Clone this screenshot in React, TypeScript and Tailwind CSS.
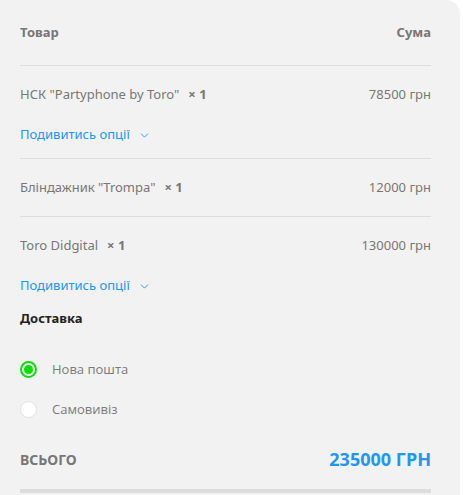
import { ChevronDown } from "lucide-react";

const items = [
  { name: 'НСК "Partyphone by Toro"', qty: 1, sum: "78500 грн", options: true },
  { name: 'Бліндажник "Trompa"', qty: 1, sum: "12000 грн", options: false },
  { name: "Toro Didgital", qty: 1, sum: "130000 грн", options: true },
];

function Radio({ checked, label }: { checked: boolean; label: string }) {
  return (
    <label className="flex items-center h-10">
      <span
        className={
          checked
            ? "w-[17px] h-[17px] rounded-full border-2 border-[#00e000] bg-white flex items-center justify-center"
            : "w-[17px] h-[17px] rounded-full border border-[#e2e2e2] bg-white"
        }
      >
        {checked && <span className="w-[9px] h-[9px] rounded-full bg-[#00e000]" />}
      </span>
      <span className="ml-[15px] text-[13px] text-[#7a7a7a] font-['Open_Sans',sans-serif]">{label}</span>
    </label>
  );
}

export default function App() {
  return (
    <div className="min-h-screen bg-white font-['Noto_Sans',sans-serif]">
      <div className="w-[460px] h-[495px] bg-[#f2f2f2] rounded-tr-[14px] pl-5 pr-[29px] pt-[22px] overflow-hidden">
        <div className="flex justify-between text-[13px] font-bold text-[#777] h-[22px] items-center">
          <span>Товар</span>
          <span>Сума</span>
        </div>
        <div className="border-t border-[#dedede] mt-[21px]" />

        {items.map((item, i) => (
          <div key={item.name} className={i > 0 ? "border-t border-[#dedede]" : ""}>
            <div className="flex justify-between items-center h-[57px] text-[13px] text-[#777]">
              <span>
                {item.name}
                <span className="font-bold ml-[9px]">× {item.qty}</span>
              </span>
              <span>{item.sum}</span>
            </div>
            {item.options && (
              <div className="flex items-center gap-2 h-[22px] mt-[1px] mb-[12px] text-[13px] text-[#2196f3]">
                Подивитись опції
                <ChevronDown size={13} strokeWidth={1.75} />
              </div>
            )}
          </div>
        ))}

        <div className="text-[13px] font-bold text-[#222] mt-[7px]">Доставка</div>
        <div className="mt-[21px]">
          <Radio checked label="Нова пошта" />
          <Radio checked={false} label="Самовивіз" />
        </div>

        <div className="flex justify-between items-center mt-[16px]">
          <span className="text-[14px] font-bold text-[#777]">ВСЬОГО</span>
          <span className="text-[18px] font-bold text-[#2196f3]">235000 ГРН</span>
        </div>
        <div className="h-[4px] bg-[#dddddd] mt-[16px]" />
      </div>
    </div>
  );
}
